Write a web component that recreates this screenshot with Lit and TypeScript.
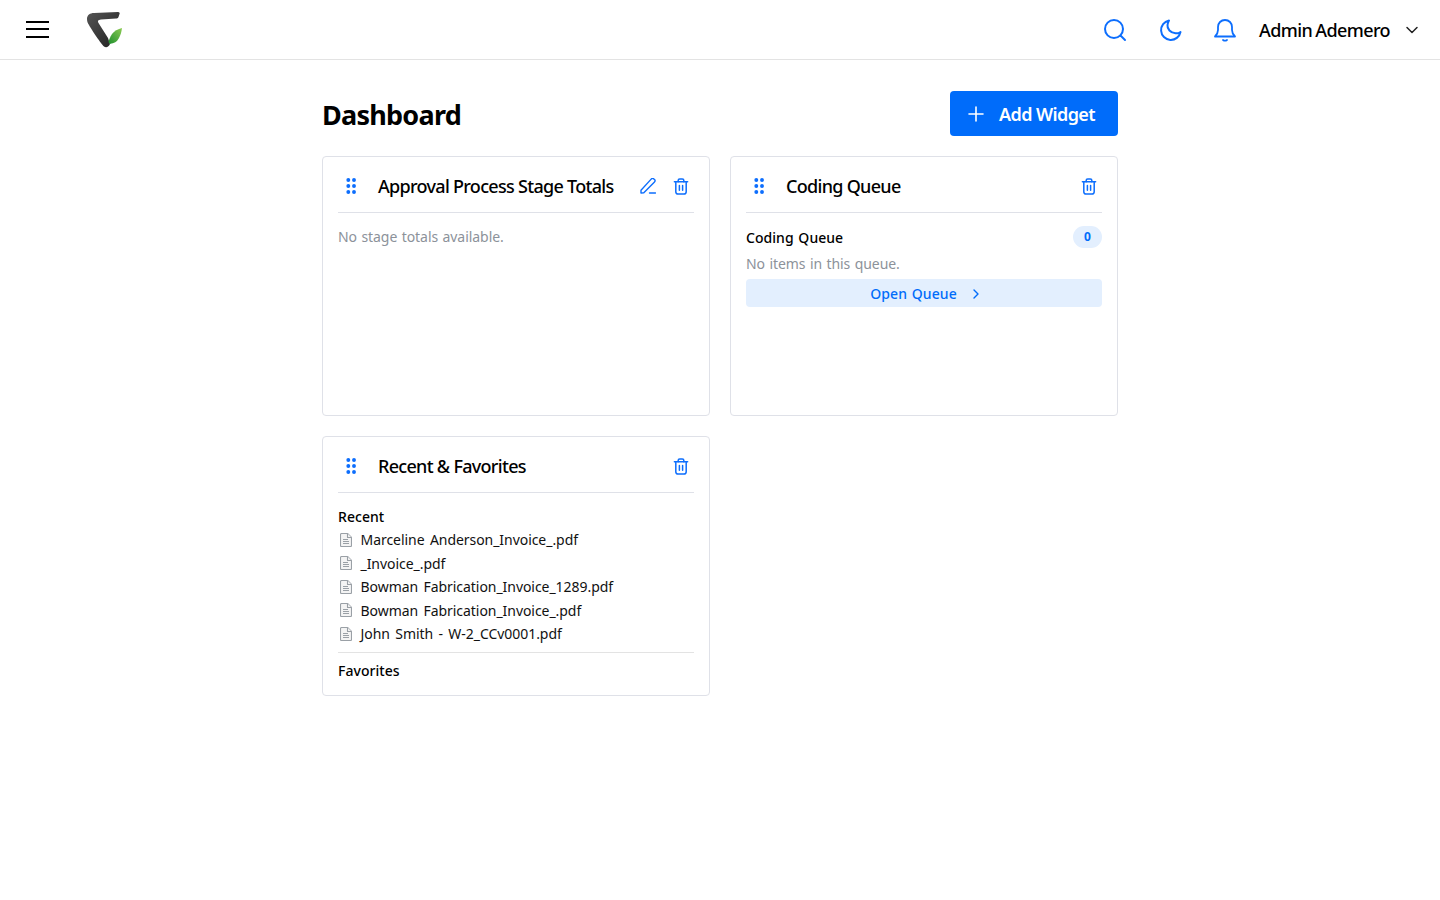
import { LitElement, html, css } from "lit";
import { customElement } from "lit/decorators.js";

const grip = html`<svg class="grip" width="10" height="16" viewBox="0 0 10 16" fill="#0d6efd"><circle cx="2.300" cy="2" r="1.950"/><circle cx="8" cy="2" r="1.950"/><circle cx="2.300" cy="8" r="1.950"/><circle cx="8" cy="8" r="1.950"/><circle cx="2.300" cy="14" r="1.950"/><circle cx="8" cy="14" r="1.950"/></svg>`;
const trash = html`<svg class="ico" width="16" height="17" viewBox="0 0 16 18" fill="none" stroke="#0d6efd" stroke-width="1.600" stroke-linecap="round" stroke-linejoin="round"><path d="M1 4h14"/><path d="M5 4V2.600C5 1.700 5.700 1 6.600 1h2.800C10.300 1 11 1.700 11 2.600V4"/><path d="M2.500 4v10.500C2.500 15.900 3.600 17 5 17h6c1.400 0 2.500-1.100 2.500-2.500V4"/><path d="M6.300 8v5M9.700 8v5"/></svg>`;
const pencil = html`<svg class="ico" width="16" height="16" viewBox="0 0 16 16" fill="none" stroke="#0d6efd" stroke-width="1.400" stroke-linecap="round" stroke-linejoin="round"><path d="M1 12.200 1 15l2.800-.2L14.500 4c.7-.7.7-1.700 0-2.400l-.7-.7c-.7-.7-1.700-.7-2.400 0L1 12.200Z"/><path d="M9.500 15h6"/></svg>`;
const fileIcon = html`<svg class="file" width="12" height="14" viewBox="0 0 12 14" fill="#f4f4f4" stroke="#9aa0a6" stroke-width="1.100" stroke-linejoin="round"><path d="M1.500.5h6l4 4v8a1 1 0 0 1-1 1h-9a1 1 0 0 1-1-1v-11a1 1 0 0 1 1-1Z"/><path d="M7.500.5v4h4"/><path d="M3 6.500h5M3 8.500h6M3 10.500h6"/></svg>`;

const files = [
  "Marceline Anderson_Invoice_.pdf",
  "_Invoice_.pdf",
  "Bowman Fabrication_Invoice_1289.pdf",
  "Bowman Fabrication_Invoice_.pdf",
  "John Smith - W-2_CCv0001.pdf",
];

@customElement("app-root")
export class AppRoot extends LitElement {
  static styles = css`
    :host { display: block; min-height: 900px; background: #fff; color: #000; font-family: "Noto Sans", "Open Sans", "Liberation Sans", sans-serif; }
    * { box-sizing: border-box; }
    svg { display: block; flex: none; }
    .top { height: 60px; border-bottom: 1px solid #e3e3e3; display: flex; align-items: center; padding: 0 21px 0 26px; }
    .burger { width: 23px; height: 17px; display: flex; flex-direction: column; justify-content: space-between; margin-top: -1px; }
    .burger i { display: block; height: 2px; background: #000; }
    .logo { margin-left: 37px; }
    .spacer { flex: 1; }
    .tools { display: flex; align-items: center; }
    .gap { margin-left: 31px; }
    .user { font-size: 18px; font-weight: 500; letter-spacing: -0.6px; word-spacing: -1px; margin-left: 22px; line-height: 24px; }
    .caret { margin-left: 15px; }
    main { width: 796px; margin: 0 auto; padding-top: 31px; }
    .head { display: flex; justify-content: space-between; align-items: center; height: 45px; margin-bottom: 20px; }
    h1 { margin: 0; font-size: 27px; line-height: 48px; font-weight: 700; letter-spacing: -0.75px; padding-top: 3px; }
    .add { width: 168px; height: 45px; background: #006cfa; color: #fff; border: 0; border-radius: 4px; display: flex; align-items: center; font: 600 18px/24px "Noto Sans", sans-serif; letter-spacing: -0.6px; padding: 0 0 0 18px; gap: 15px; }
    .grid { display: grid; grid-template-columns: 388px 388px; grid-auto-rows: 260px; gap: 20px; }
    .card { border: 1px solid #dfe1e8; border-radius: 4px; padding: 0 15px; display: flex; flex-direction: column; }
    .chead { height: 56px; flex: none; border-bottom: 1px solid #dfe1e8; display: flex; align-items: center; padding: 4px 5px 0 8px; }
    .grip { margin-right: 22px; margin-top: -1px; }
    h2 { margin: 0; font-size: 18px; font-weight: 500; letter-spacing: -0.7px; line-height: 24px; flex: 1; white-space: nowrap; margin-top: -1px; }
    .actions { display: flex; align-items: center; gap: 17px; margin-top: -1px; }
    .muted { color: #8c929a; font-size: 14px; line-height: 20px; letter-spacing: -0.05px; word-spacing: 0.8px; }
    .b1 { padding-top: 14px; }
    .qrow { display: flex; justify-content: space-between; align-items: center; padding-top: 12px; height: 35px; }
    .lbl { font-size: 14px; font-weight: 500; line-height: 20px; letter-spacing: 0.05px; word-spacing: 1px; }
    .badge { width: 29px; height: 22px; border-radius: 11px; background: #e3effe; color: #006cfa; font-size: 12px; font-weight: 700; display: flex; align-items: center; justify-content: center; }
    .qrow .lbl { margin-top: 3px; }
    .m2 { margin-top: 6px; height: 25px; }
    .open { height: 28px; width: 100%; border: 0; border-radius: 4px; background: #e3effe; color: #006cfa; font: 500 14px/20px "Noto Sans", sans-serif; letter-spacing: 0.1px; word-spacing: 1px; display: flex; align-items: center; justify-content: center; gap: 15px; padding: 1px 0 0 2px; }
    .b3 { padding-top: 14px; flex: 1; display: flex; flex-direction: column; }
    ul { list-style: none; margin: 1px 0 0; padding: 0 0 6px; border-bottom: 1px solid #e3e3e3; }
    li { height: 23.500px; display: flex; align-items: center; gap: 8.500px; font-size: 14px; letter-spacing: -0.05px; word-spacing: 1.800px; padding-left: 2px; color: #111; }
    .fav { margin-top: 8px; }
  `;

  render() {
    return html`
      <header class="top">
        <div class="burger"><i></i><i></i><i></i></div>
        <svg class="logo" width="38" height="38" viewBox="0 0 38 38">
          <defs>
            <linearGradient id="dk" x1="0" y1="0" x2="1" y2="1"><stop offset="0" stop-color="#555"/><stop offset="1" stop-color="#1f1f1f"/></linearGradient>
            <linearGradient id="gr" x1="1" y1="0" x2="0" y2="1"><stop offset="0" stop-color="#8ccb52"/><stop offset="1" stop-color="#1f8f2e"/></linearGradient>
          </defs>
          <path fill="url(#dk)" d="M1 8C1 4 4 2 8 2L32 1C33.500 1 34 2 33.500 3L32.500 6C32 7 31 7.500 30 7.500L15 8.500C12 8.800 11.500 10 12.500 12L22 27L24 33C23 36 20 37 18 35.500C16 34 5 18 3 14C1.500 12 1 10 1 8Z"/>
          <path fill="url(#gr)" d="M36 17C32 18 28 20 26 23C24 26 23 29 22.500 31L24 33C28 32 31 31 33 27C34.500 24 35.500 21 36 17Z"/>
        </svg>
        <div class="spacer"></div>
        <div class="tools">
          <svg width="24" height="24" viewBox="0 0 24 24" fill="none" stroke="#0d6efd" stroke-width="2" stroke-linecap="round"><circle cx="11" cy="11" r="9"/><path d="M17.500 17.500 22 22"/></svg>
          <svg class="gap" width="24" height="24" viewBox="0 0 24 24" fill="none" stroke="#0d6efd" stroke-width="2" stroke-linejoin="round"><path d="M11 2.500A9.800 9.800 0 1 0 22.500 14c-1.500 1-3.500 1.500-5 1.300C12.500 15 9 11 9.500 7c.2-1.700.7-3.200 1.500-4.500Z"/></svg>
          <svg class="gap" width="24" height="24" viewBox="0 0 24 24" fill="none" stroke="#0d6efd" stroke-width="1.800" stroke-linecap="round" stroke-linejoin="round"><path d="M2 18.500h20c-1.500-1.500-3-3-3-6.500V9c0-4-3-7-7-7S5 5 5 9v3c0 3.500-1.500 5-3 6.500Z"/><path d="M10 22c1 .7 3 .7 4 0"/></svg>
          <span class="user">Admin Ademero</span>
          <svg class="caret" width="14" height="8" viewBox="0 0 14 8" fill="none" stroke="#222" stroke-width="1.500" stroke-linecap="round" stroke-linejoin="round"><path d="M2 1.500 7 6.500l5-5"/></svg>
        </div>
      </header>
      <main>
        <div class="head">
          <h1>Dashboard</h1>
          <button class="add"><svg width="16" height="16" viewBox="0 0 16 16" stroke="#fff" stroke-width="1.600" stroke-linecap="round"><path d="M8 1v14M1 8h14"/></svg>Add Widget</button>
        </div>
        <div class="grid">
          <section class="card">
            <div class="chead">${grip}<h2>Approval Process Stage Totals</h2><div class="actions">${pencil}${trash}</div></div>
            <div class="b1 muted">No stage totals available.</div>
          </section>
          <section class="card">
            <div class="chead">${grip}<h2>Coding Queue</h2><div class="actions">${trash}</div></div>
            <div class="qrow"><span class="lbl">Coding Queue</span><span class="badge">0</span></div>
            <div class="muted m2">No items in this queue.</div>
            <button class="open">Open Queue <svg width="8" height="12" viewBox="0 0 8 12" fill="none" stroke="#006cfa" stroke-width="1.400" stroke-linecap="round" stroke-linejoin="round"><path d="M2 2l4 4-4 4"/></svg></button>
          </section>
          <section class="card">
            <div class="chead">${grip}<h2>Recent &amp; Favorites</h2><div class="actions">${trash}</div></div>
            <div class="b3">
              <div class="lbl">Recent</div>
              <ul>${files.map((f) => html`<li>${fileIcon}<span>${f}</span></li>`)}</ul>
              <div class="lbl fav">Favorites</div>
            </div>
          </section>
        </div>
      </main>
    `;
  }
}
